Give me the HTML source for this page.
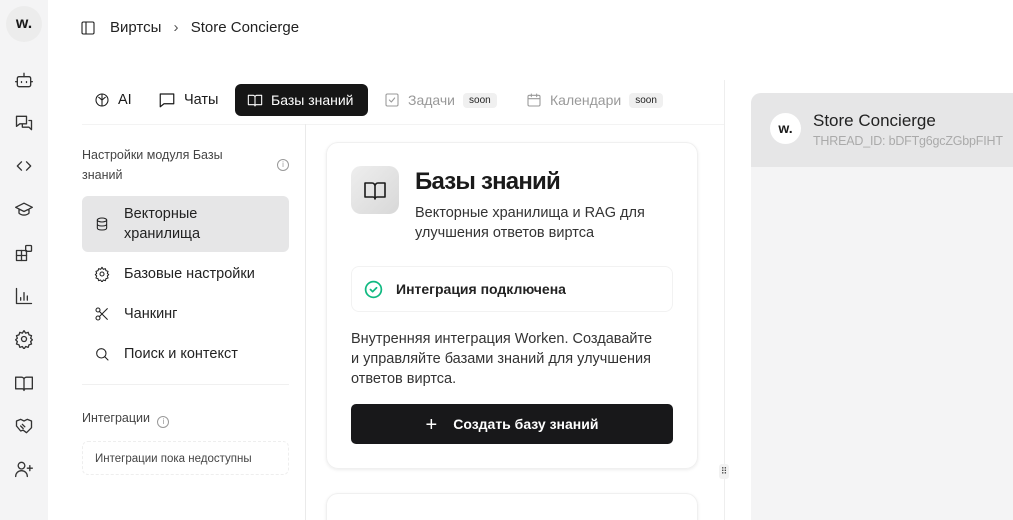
<!DOCTYPE html><html><head><meta charset="utf-8"><style>
*{box-sizing:border-box;margin:0;padding:0}
html,body{width:1013px;height:520px;overflow:hidden}
body{background:#fff;font-family:"Liberation Sans","Noto Sans CJK SC",sans-serif;color:#1a1a1a;position:relative;white-space:nowrap}
.abs{position:absolute}
svg{fill:none;stroke:currentColor;stroke-width:1.6;stroke-linecap:round;stroke-linejoin:round}
.side{left:0;top:0;width:48px;height:520px;background:#f4f4f5}
.side svg{position:absolute;left:14px;width:20px;height:20px;color:#333}
.tab{top:84px;height:32px;display:flex;align-items:center;gap:8px;font-size:14.5px;padding:0 12px;border-radius:6px}
.soon{font-size:10px;background:#f0f0f0;padding:2px 6px;border-radius:4px;color:#222}
.mi{left:82px;width:207px;display:flex;align-items:center;font-size:14.5px;color:#222}
.mi svg{width:16px;height:16px;margin:0 14px 0 12px;flex:none}
.info{display:inline-block;width:12px;height:12px;border:1px solid #999;border-radius:50%;font-size:8px;line-height:10px;text-align:center;color:#999}
</style></head><body>
<div class="abs side">
<div class="abs" style="left:6px;top:6px;width:36px;height:36px;border-radius:50%;background:#ececec;font-weight:bold;font-size:16px;text-align:center;line-height:36px">w.</div>
<svg style="top:70px" viewBox="0 0 24 24"><rect x="4" y="8" width="16" height="12" rx="2"/><path d="M12 4v4M9 14v1M15 14v1M2 14h2M20 14h2"/></svg>
<svg style="top:113px" viewBox="0 0 24 24"><path d="M3 4h12v9H7l-4 3zM18 9h3v11l-3-3h-8v-4"/></svg>
<svg style="top:156px" viewBox="0 0 24 24"><path d="M9 7l-5 5 5 5M15 7l5 5-5 5"/></svg>
<svg style="top:199px" viewBox="0 0 24 24"><path d="M2 10l10-5 10 5-10 5zM6 12v5c3 3 9 3 12 0v-5"/></svg>
<svg style="top:243px" viewBox="0 0 24 24"><rect x="3" y="9" width="12" height="12"/><path d="M3 15h12M9 9v12"/><rect x="14" y="3" width="7" height="7" rx="1"/></svg>
<svg style="top:286px" viewBox="0 0 24 24"><path d="M3 3v18h18M8 17v-3M12 17V8M16 17v-5"/></svg>
<svg style="top:329px" viewBox="0 0 24 24"><circle cx="12" cy="12" r="3"/><path d="M12 2l2 3 3-1 1 3 3 1-1 3 2 2-2 2 1 3-3 1-1 3-3-1-2 3-2-3-3 1-1-3-3-1 1-3-2-2 2-2-1-3 3-1 1-3 3 1z"/></svg>
<svg style="top:373px" viewBox="0 0 24 24"><path d="M2 5h7a3 3 0 013 3v13a2 2 0 00-2-2H2zM22 5h-7a3 3 0 00-3 3v13a2 2 0 012-2h8z"/></svg>
<svg style="top:416px" viewBox="0 0 24 24"><path d="M3 6l5-2 4 2 4-2 5 2v8l-6 6-4-3-3 1-5-6z"/><path d="M8 12l3 3M10 10l3 3"/></svg>
<svg style="top:459px" viewBox="0 0 24 24"><circle cx="9" cy="8" r="4"/><path d="M2 21c0-4 3-7 7-7s7 3 7 7M19 8v6M16 11h6"/></svg>
</div>
<svg class="abs" style="left:80px;top:20px;width:16px;height:16px" viewBox="0 0 24 24"><rect x="3" y="3" width="18" height="18" rx="2"/><path d="M9 3v18"/></svg>
<div class="abs" style="left:110px;top:19px;font-size:15px;color:#222">Виртсы <span style="margin:0 8px;color:#555">›</span> Store Concierge</div>
<div class="abs tab" style="left:82px"><svg width="16" height="16" viewBox="0 0 24 24"><circle cx="12" cy="12" r="9"/><path d="M12 3v18M7 8c2 1 3 3 5 4M17 8c-2 1-3 3-5 4"/></svg>AI</div>
<div class="abs tab" style="left:146px"><svg width="18" height="18" viewBox="0 0 24 24"><path d="M3 4h18v13H8l-5 4z"/></svg>Чаты</div>
<div class="abs tab" style="left:235px;width:133px;background:#161616;color:#fff;font-size:14px"><svg width="16" height="16" viewBox="0 0 24 24"><path d="M2 5h7a3 3 0 013 3v13a2 2 0 00-2-2H2zM22 5h-7a3 3 0 00-3 3v13a2 2 0 012-2h8z"/></svg>Базы знаний</div>
<div class="abs tab" style="left:372px;color:#999;font-size:14px"><svg width="16" height="16" viewBox="0 0 24 24"><rect x="3" y="3" width="18" height="18" rx="2"/><path d="M8 12l3 3 5-6"/></svg>Задачи <span class="soon">soon</span></div>
<div class="abs tab" style="left:514px;color:#999;font-size:14px"><svg width="16" height="16" viewBox="0 0 24 24"><rect x="3" y="5" width="18" height="16" rx="2"/><path d="M3 10h18M8 3v4M16 3v4"/></svg>Календари <span class="soon">soon</span></div>
<div class="abs" style="left:82px;top:124px;width:643px;border-top:1px solid #f3f3f3"></div>
<div class="abs" style="left:305px;top:124px;height:396px;border-left:1px solid #eaeaea"></div>
<div class="abs" style="left:724px;top:80px;height:440px;border-left:1px solid #eee"></div>
<div class="abs" style="left:82px;top:145px;font-size:12.5px;line-height:20px;color:#444;width:170px;white-space:normal">Настройки модуля Базы знаний</div>
<div class="abs info" style="left:277px;top:159px">i</div>
<div class="abs mi" style="top:196px;height:56px;background:#e6e6e7;border-radius:6px;line-height:20px"><svg viewBox="0 0 24 24"><ellipse cx="12" cy="6" rx="7" ry="3"/><path d="M5 6v12c0 2 3 3 7 3s7-1 7-3V6M5 12c0 2 3 3 7 3s7-1 7-3"/></svg>Векторные<br>хранилища</div>
<div class="abs mi" style="top:266px"><svg viewBox="0 0 24 24"><circle cx="12" cy="12" r="3"/><path d="M12 2l2 3 3-1 1 3 3 1-1 3 2 2-2 2 1 3-3 1-1 3-3-1-2 3-2-3-3 1-1-3-3-1 1-3-2-2 2-2-1-3 3-1 1-3 3 1z"/></svg>Базовые настройки</div>
<div class="abs mi" style="top:306px"><svg viewBox="0 0 24 24"><circle cx="6" cy="6" r="3"/><circle cx="6" cy="18" r="3"/><path d="M8 8l12 12M8 16L20 4"/></svg>Чанкинг</div>
<div class="abs mi" style="top:346px"><svg viewBox="0 0 24 24"><circle cx="11" cy="11" r="7"/><path d="M16 16l5 5"/></svg>Поиск и контекст</div>
<div class="abs" style="left:82px;top:384px;width:207px;border-top:1px solid #f0f0f0"></div>
<div class="abs" style="left:82px;top:411px;font-size:12.5px;color:#444">Интеграции <span class="info" style="vertical-align:-2px;margin-left:4px">i</span></div>
<div class="abs" style="left:82px;top:441px;width:207px;height:34px;border:1px dashed #eee;border-radius:6px;font-size:11.5px;color:#444;padding:11px 12px">Интеграции пока недоступны</div>
<div class="abs" style="left:326px;top:142px;width:372px;height:327px;border:1px solid #f0f0f0;border-radius:12px;box-shadow:0 1px 3px rgba(0,0,0,.08)"></div>
<div class="abs" style="left:351px;top:166px;width:48px;height:48px;border-radius:10px;background:linear-gradient(135deg,#eee,#d8d8d8)"><svg style="margin:12px" width="24" height="24" viewBox="0 0 24 24" stroke-width="2"><path d="M2 5h7a3 3 0 013 3v13a2 2 0 00-2-2H2zM22 5h-7a3 3 0 00-3 3v13a2 2 0 012-2h8z"/></svg></div>
<div class="abs" style="left:415px;top:168px;font-size:24px;font-weight:bold;letter-spacing:-.8px">Базы знаний</div>
<div class="abs" style="left:415px;top:203px;font-size:14.5px;line-height:20px;color:#333;width:245px;white-space:normal">Векторные хранилища и RAG для улучшения ответов виртса</div>
<div class="abs" style="left:351px;top:266px;width:322px;height:46px;border:1px solid #f2f2f2;border-radius:8px"></div>
<svg class="abs" style="left:363px;top:279px;width:21px;height:21px;color:#10b981;stroke-width:2" viewBox="0 0 24 24"><circle cx="12" cy="12" r="9"/><path d="M8.5 12l2.5 2.5 4.5-4.5"/></svg>
<div class="abs" style="left:396px;top:281px;font-size:14px;font-weight:bold;color:#222">Интеграция подключена</div>
<div class="abs" style="left:351px;top:329px;font-size:14.5px;line-height:20px;color:#333">Внутренняя интеграция Worken. Создавайте<br>и управляйте базами знаний для улучшения<br>ответов виртса.</div>
<div class="abs" style="left:351px;top:404px;width:322px;height:40px;background:#18181a;border-radius:5px;color:#fff;font-size:14px;font-weight:bold;text-align:center;line-height:40px"><span style="font-weight:normal;font-size:20px;vertical-align:-2px;margin-right:16px">+</span>Создать базу знаний</div>
<div class="abs" style="left:326px;top:493px;width:372px;height:40px;border:1px solid #f0f0f0;border-radius:12px;box-shadow:0 1px 3px rgba(0,0,0,.08)"></div>
<div class="abs" style="left:719px;top:464px;width:10px;height:15px;background:#f2f2f2;border-radius:3px;font-size:9px;text-align:center;line-height:15px;color:#444">⠿</div>
<div class="abs" style="left:751px;top:93px;width:262px;height:427px;background:#f4f4f5;border-top-left-radius:10px;overflow:hidden">
<div style="height:74px;background:#e6e6e7"></div>
<div class="abs" style="left:19px;top:20px;width:31px;height:31px;background:#fff;border-radius:50%;font-weight:bold;font-size:14px;text-align:center;line-height:31px">w.</div>
<div class="abs" style="left:62px;top:18px;font-size:17px;color:#222">Store Concierge</div>
<div class="abs" style="left:62px;top:41px;font-size:12.5px;color:#aaa;letter-spacing:-.2px">THREAD_ID: bDFTg6gcZGbpFIHT</div>
</div>
</body></html>
